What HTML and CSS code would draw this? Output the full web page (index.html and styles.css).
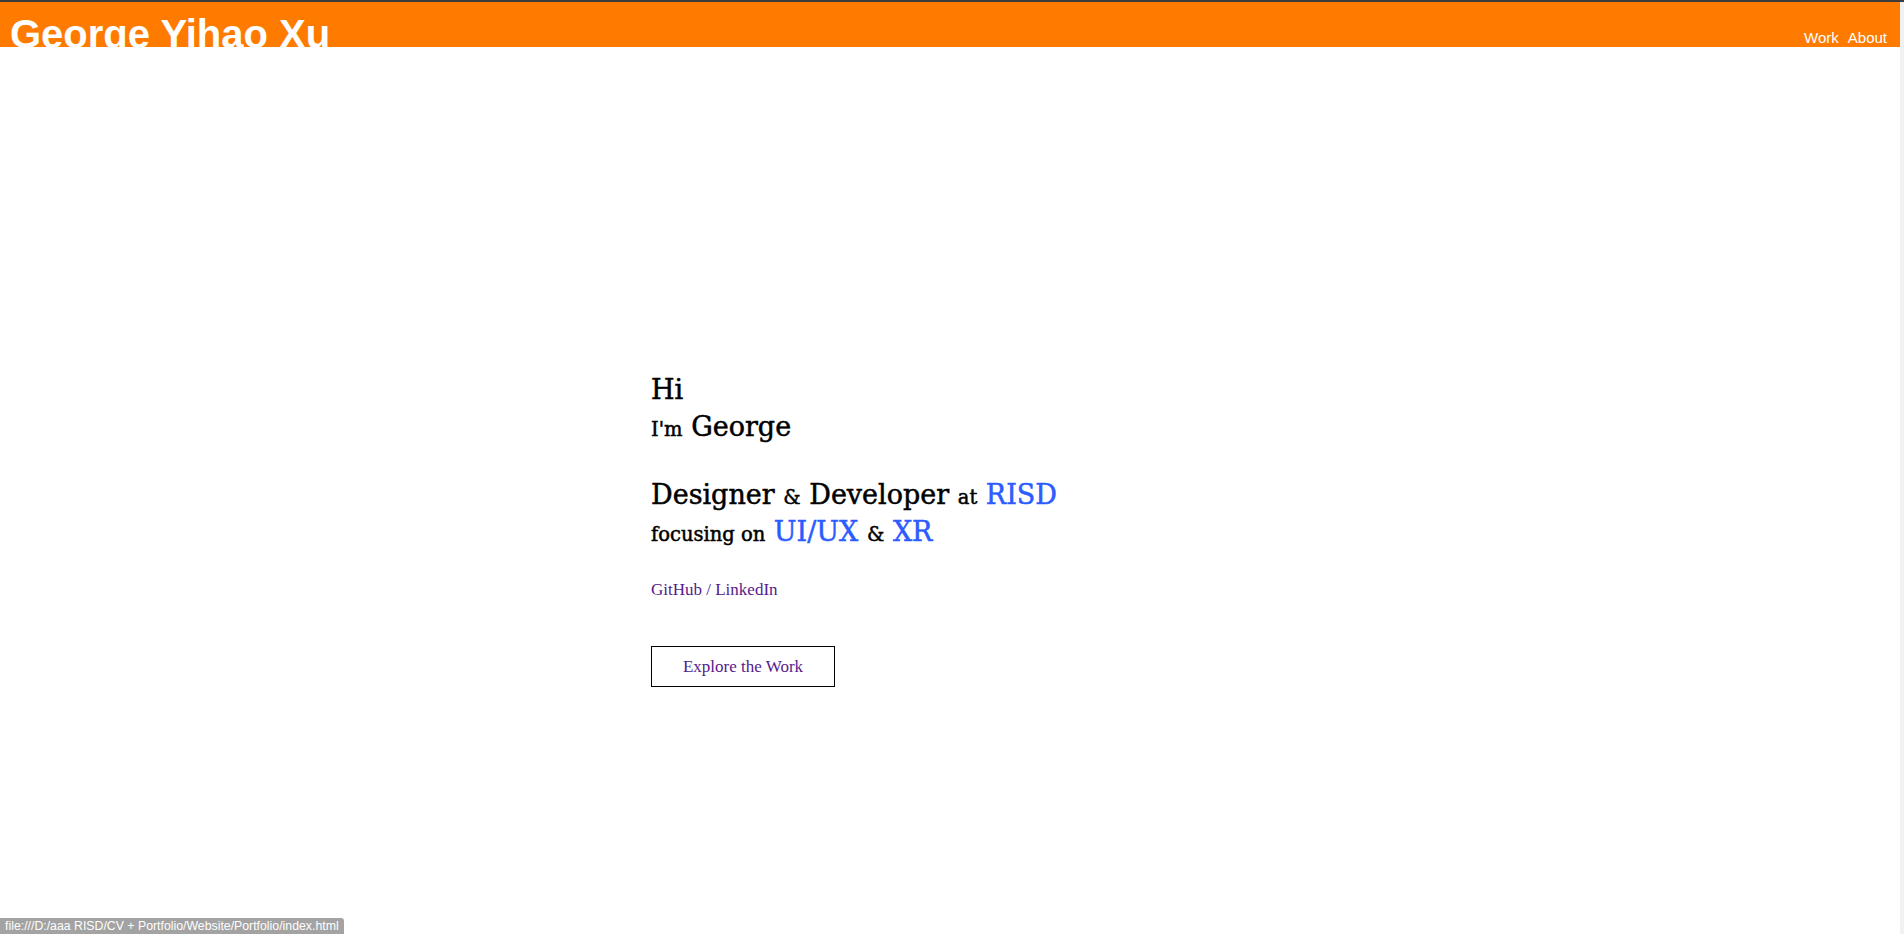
FILE: index.html
```html
<!DOCTYPE html>
<html lang="en">
<head>
<meta charset="utf-8">
<title>George Yihao Xu</title>
<link rel="stylesheet" href="styles.css">
</head>
<body>
<div class="page">
  <header class="topbar">
    <h1 class="brand">George Yihao Xu</h1>
    <nav class="nav">
      <a class="nav-link" href="#work">Work</a>
      <a class="nav-link" href="#about">About</a>
    </nav>
  </header>
  <main class="hero">
    <div class="block">
      <div class="line"><span class="big">Hi</span></div>
      <div class="line"><span class="small">I'm</span> <span class="big">George</span></div>
    </div>
    <div class="block role">
      <div class="line"><span class="big">Designer</span> <span class="small">&amp;</span> <span class="big">Developer</span> <span class="small">at</span> <span class="big accent">RISD</span></div>
      <div class="line"><span class="small">focusing on</span> <span class="big accent">UI/UX</span> <span class="small">&amp;</span> <span class="big accent">XR</span></div>
    </div>
    <p class="social"><a class="social-link" href="#github">GitHub</a> / <a class="social-link" href="#linkedin">LinkedIn</a></p>
    <a class="cta" href="#work">Explore the Work</a>
  </main>
</div>
<div class="status">file:///D:/aaa RISD/CV + Portfolio/Website/Portfolio/index.html</div>
</body>
</html>
```
FILE: styles.css
```css
html, body {
  margin: 0;
  padding: 0;
}
body {
  border-top: 2px solid #3c3c3c;
  background: #f1f1f1;
  font-family: "DejaVu Serif", serif;
}
.page {
  margin-right: 4px;
  background: #fff;
  min-height: calc(100vh - 2px);
}
.topbar {
  display: flex;
  justify-content: space-between;
  align-items: flex-end;
  height: 45px;
  overflow: hidden;
  background: #ff7b00;
}
.brand {
  align-self: flex-start;
  margin: 0;
  padding: 9px 0 0 10px;
  font-family: "Liberation Sans", Arial, sans-serif;
  font-size: 40px;
  font-weight: bold;
  line-height: 46px;
  color: #fff;
  white-space: nowrap;
}
.nav {
  display: flex;
  gap: 9px;
  padding: 0 13px 1px 0;
  font-family: "Liberation Sans", Arial, sans-serif;
  font-size: 15px;
  line-height: 17px;
}
.nav-link {
  color: #fff;
  text-decoration: none;
}
.hero {
  padding: 324px 0 0 651px;
}
.line {
  font-size: 27px;
  line-height: 37px;
  color: #000;
  white-space: nowrap;
  -webkit-text-stroke: 0.5px currentColor;
}
.big {
  font-size: 27px;
  line-height: 1;
}
.small {
  font-size: 19.5px;
  line-height: 1;
}
.accent {
  color: #2c5bff;
}
.role {
  margin-top: 31px;
}
.social {
  margin: 30px 0 0;
  font-family: "Liberation Serif", "Times New Roman", serif;
  font-size: 17px;
  line-height: 20px;
  color: #551a8b;
}
.social-link {
  color: #551a8b;
  text-decoration: none;
}
.cta {
  display: flex;
  align-items: center;
  justify-content: center;
  box-sizing: border-box;
  width: 184px;
  height: 41px;
  margin-top: 46px;
  border: 1px solid #000;
  font-family: "Liberation Serif", "Times New Roman", serif;
  font-size: 17px;
  color: #551a8b;
  text-decoration: none;
}
.status {
  position: fixed;
  left: 0;
  bottom: 0;
  height: 16px;
  padding: 0 5px;
  border-top-right-radius: 3px;
  background: #a3a3a3;
  color: #fff;
  font-family: "Liberation Sans", Arial, sans-serif;
  font-size: 12.3px;
  line-height: 16px;
  white-space: nowrap;
}
```
